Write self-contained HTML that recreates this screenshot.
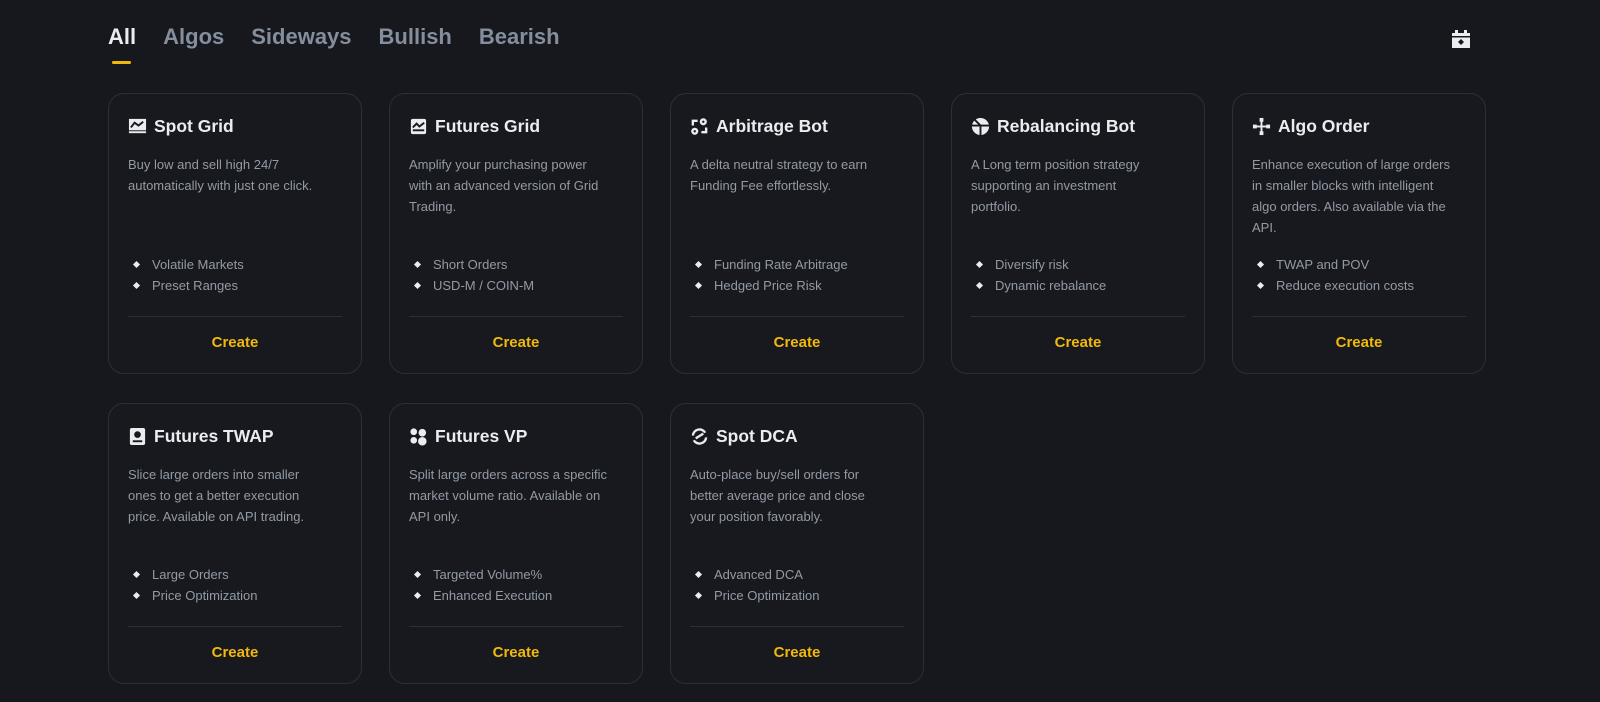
<!DOCTYPE html>
<html><head><meta charset="utf-8"><style>
*{margin:0;padding:0;box-sizing:border-box}
body{width:1600px;height:702px;background:#17181d;font-family:"Liberation Sans",sans-serif;overflow:hidden;position:relative}
.tabs{position:absolute;left:108px;top:24px;display:flex;gap:27px;font-size:22px;font-weight:bold;color:#848e9c}
.tabs .a{color:#eaecef;position:relative}
.tabs .a:after{content:"";position:absolute;left:4px;top:37px;width:19px;height:3px;background:#f0b90b;border-radius:2px}
.cal{position:absolute;left:1451px;top:29px}
.card{position:absolute;width:254px;height:281px;border:1px solid #2b2f36;border-radius:16px;background:#18191f}
.t{position:absolute;left:19px;top:22px;font-size:17.5px;font-weight:bold;color:#eaecef;display:flex;align-items:center;gap:7px}
.t svg{width:19px;height:19px}
.d{position:absolute;left:19px;top:60px;font-size:13px;line-height:21px;color:#929aa5;white-space:nowrap}
.b{position:absolute;left:19px;top:160px;font-size:13px;line-height:21px;color:#929aa5}
.b div:before{content:"";display:inline-block;width:5px;height:5px;background:#eaecef;transform:rotate(45deg);margin:0 13px 2px 6px}
.hr{position:absolute;left:19px;right:19px;top:222px;border-top:1px solid #2b2f36}
.c{position:absolute;left:0;right:0;top:240px;text-align:center;color:#f0b90b;font-weight:bold;font-size:15px}
</style></head><body>
<div class="tabs"><span class="a">All</span><span>Algos</span><span>Sideways</span><span>Bullish</span><span>Bearish</span></div>
<svg class="cal" width="20" height="20" viewBox="0 0 20 20"><rect x="1" y="4" width="18" height="15" fill="#eaecef"/><rect x="4" y="1" width="3" height="4" fill="#eaecef"/><rect x="13" y="1" width="3" height="4" fill="#eaecef"/><rect x="1" y="7" width="18" height="1.5" fill="#17181d"/><path d="M10 10l3 3-3 3-3-3z" fill="#17181d"/></svg>

<div class="card" style="left:108px;top:93px"><div class="t"><svg viewBox="0 0 20 20"><rect x="1" y="2" width="18" height="12" fill="#eaecef"/><path d="M3 11l4-5 4 3 5-4" stroke="#18191f" stroke-width="2" fill="none"/><rect x="1" y="15" width="18" height="2" fill="#eaecef"/></svg>Spot Grid</div><div class="d">Buy low and sell high 24/7<br>automatically with just one click.</div><div class="b"><div>Volatile Markets</div><div>Preset Ranges</div></div><div class="hr"></div><div class="c">Create</div></div>

<div class="card" style="left:389px;top:93px"><div class="t"><svg viewBox="0 0 20 20"><rect x="2" y="2" width="16" height="16" rx="2" fill="#eaecef"/><path d="M4 11l4-4 3 3 5-4" stroke="#18191f" stroke-width="2" fill="none"/><rect x="4" y="13" width="12" height="2" fill="#18191f"/></svg>Futures Grid</div><div class="d">Amplify your purchasing power<br>with an advanced version of Grid<br>Trading.</div><div class="b"><div>Short Orders</div><div>USD-M / COIN-M</div></div><div class="hr"></div><div class="c">Create</div></div>

<div class="card" style="left:670px;top:93px"><div class="t"><svg viewBox="0 0 20 20" fill="none" stroke="#eaecef" stroke-width="2.5"><circle cx="14" cy="5" r="2.5"/><circle cx="5" cy="15" r="2.5"/><path d="M3 9V4h5M17 11v5h-5"/></svg>Arbitrage Bot</div><div class="d">A delta neutral strategy to earn<br>Funding Fee effortlessly.</div><div class="b"><div>Funding Rate Arbitrage</div><div>Hedged Price Risk</div></div><div class="hr"></div><div class="c">Create</div></div>

<div class="card" style="left:951px;top:93px"><div class="t"><svg viewBox="0 0 20 20"><circle cx="10" cy="10" r="9" fill="#eaecef"/><path d="M1 9h18M10 9v11M10 9L4 3" stroke="#18191f" stroke-width="2"/></svg>Rebalancing Bot</div><div class="d">A Long term position strategy<br>supporting an investment<br>portfolio.</div><div class="b"><div>Diversify risk</div><div>Dynamic rebalance</div></div><div class="hr"></div><div class="c">Create</div></div>

<div class="card" style="left:1232px;top:93px"><div class="t"><svg viewBox="0 0 20 20" fill="#eaecef"><rect x="8" y="1" width="4" height="4"/><rect x="1" y="8" width="4" height="4"/><rect x="15" y="8" width="4" height="4"/><rect x="8" y="15" width="4" height="4"/><rect x="9" y="4" width="2" height="12"/><rect x="4" y="9" width="12" height="2"/></svg>Algo Order</div><div class="d">Enhance execution of large orders<br>in smaller blocks with intelligent<br>algo orders. Also available via the<br>API.</div><div class="b"><div>TWAP and POV</div><div>Reduce execution costs</div></div><div class="hr"></div><div class="c">Create</div></div>

<div class="card" style="left:108px;top:403px"><div class="t"><svg viewBox="0 0 20 20"><rect x="2" y="1" width="16" height="18" rx="2" fill="#eaecef"/><circle cx="10" cy="8" r="3.5" fill="#18191f"/><rect x="5" y="14" width="10" height="2" fill="#18191f"/></svg>Futures TWAP</div><div class="d">Slice large orders into smaller<br>ones to get a better execution<br>price. Available on API trading.</div><div class="b"><div>Large Orders</div><div>Price Optimization</div></div><div class="hr"></div><div class="c">Create</div></div>

<div class="card" style="left:389px;top:403px"><div class="t"><svg viewBox="0 0 20 20" fill="#eaecef"><circle cx="5" cy="5" r="3.5"/><circle cx="14" cy="6" r="4"/><circle cx="5" cy="14" r="3.5"/><circle cx="14" cy="15" r="4.5"/></svg>Futures VP</div><div class="d">Split large orders across a specific<br>market volume ratio. Available on<br>API only.</div><div class="b"><div>Targeted Volume%</div><div>Enhanced Execution</div></div><div class="hr"></div><div class="c">Create</div></div>

<div class="card" style="left:670px;top:403px"><div class="t"><svg viewBox="0 0 20 20" fill="none" stroke="#eaecef" stroke-width="2.5"><path d="M3 9a7 7 0 0 1 13-3M17 11a7 7 0 0 1-13 3M6 12l8-5"/></svg>Spot DCA</div><div class="d">Auto-place buy/sell orders for<br>better average price and close<br>your position favorably.</div><div class="b"><div>Advanced DCA</div><div>Price Optimization</div></div><div class="hr"></div><div class="c">Create</div></div>
</body></html>
